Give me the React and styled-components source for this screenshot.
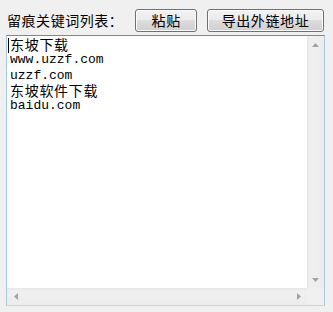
import React from "react";
import styled, { createGlobalStyle } from "styled-components";

const GlobalStyle = createGlobalStyle`
	html, body {
		margin: 0;
		padding: 0;
		background: #f0f0f0;
	}
	body {
		width: 333px;
		height: 312px;
		overflow: hidden;
		font-family: "Noto Sans CJK SC", "Liberation Sans", sans-serif;
		color: #000;
	}
`;

const Window = styled.div`
	display: flex;
	flex-direction: column;
	gap: 4px;
	padding: 9px 9px 0 6px;
`;

const Toolbar = styled.div`
	display: flex;
	align-items: center;
	height: 22px;
`;

const Label = styled.span`
	font-size: 14px;
	letter-spacing: 0.55px;
	line-height: 22px;
	padding-left: 1px;
	margin-right: 12px;
	white-space: nowrap;
`;

const Button = styled.button`
	box-sizing: border-box;
	width: ${(p) => p.$width}px;
	height: 23px;
	margin-right: ${(p) => p.$gap || 0}px;
	padding: 0;
	border: 1px solid #707070;
	border-radius: 3px;
	background: linear-gradient(#f2f2f2 0%, #ebebeb 50%, #dddddd 50%, #cfcfcf 100%);
	box-shadow: inset 0 0 0 1px #fbfbfb;
	font-family: "Noto Sans CJK SC", sans-serif;
	font-size: 14px;
	letter-spacing: 0.6px;
	line-height: 20px;
	color: #000;
`;

const TextBox = styled.div`
	box-sizing: border-box;
	width: 319px;
	height: 271px;
	border: 1px solid #a4c9e3;
	border-top-color: #5e8fc0;
	border-bottom-color: #b7d9ed;
	background: #fff;
	display: grid;
	grid-template-columns: 1fr 17px;
	grid-template-rows: 1fr 17px;
`;

const Edit = styled.div`
	padding: 1px 0 0 1px;
	min-width: 0;
`;

const Line = styled.div`
	height: 15.33px;
	line-height: 15.33px;
	white-space: nowrap;
	font-family: ${(p) =>
		p.$mono ? '"Liberation Mono", monospace' : '"Noto Sans CJK SC", sans-serif'};
	font-size: ${(p) => (p.$mono ? "13px" : "14px")};
	letter-spacing: ${(p) => (p.$mono ? "0" : "0.7px")};
	padding-left: 2px;
`;

const Caret = styled.span`
	display: inline-block;
	width: 1px;
	height: 15px;
	vertical-align: -3px;
	background: #000;
	margin-left: -2px;
	margin-right: 1px;
`;

const ScrollBar = styled.div`
	display: flex;
	flex-direction: ${(p) => (p.$horizontal ? "row" : "column")};
	justify-content: space-between;
	align-items: center;
	background: ${(p) =>
		p.$horizontal
			? "linear-gradient(#e6e6e6, #f0f0f0 3px, #ececec)"
			: "linear-gradient(90deg, #e6e6e6, #f0f0f0 3px, #ececec)"};
`;

const ArrowButton = styled.div`
	width: 17px;
	height: 17px;
	display: flex;
	align-items: center;
	justify-content: center;
`;

const Corner = styled.div`
	background: #f0f0f0;
`;

const Arrow = ({ dir }) => {
	const pts = {
		up: "0,4 7,4 3.5,0",
		down: "0,0 7,0 3.5,4",
		left: "4,0 4,7 0,3.5",
		right: "0,0 0,7 4,3.5",
	}[dir];
	const vertical = dir === "up" || dir === "down";
	return (
		<svg width={vertical ? 7 : 4} height={vertical ? 4 : 7} viewBox={vertical ? "0 0 7 4" : "0 0 4 7"}>
			<polygon points={pts} fill="#a2a2a2" />
		</svg>
	);
};

const lines = [
	{ text: "东坡下载" },
	{ text: "www.uzzf.com", mono: true },
	{ text: "uzzf.com", mono: true },
	{ text: "东坡软件下载" },
	{ text: "baidu.com", mono: true },
];

export default function App() {
	return (
		<>
			<GlobalStyle />
			<Window>
				<Toolbar>
					<Label>留痕关键词列表：</Label>
					<Button $width={62} $gap={10}>粘贴</Button>
					<Button $width={118}>导出外链地址</Button>
				</Toolbar>
				<TextBox>
					<Edit>
						{lines.map((l, i) => (
							<Line key={i} $mono={l.mono}>
								{i === 0 && <Caret />}
								{l.text}
							</Line>
						))}
					</Edit>
					<ScrollBar>
						<ArrowButton>
							<Arrow dir="up" />
						</ArrowButton>
						<ArrowButton>
							<Arrow dir="down" />
						</ArrowButton>
					</ScrollBar>
					<ScrollBar $horizontal>
						<ArrowButton>
							<Arrow dir="left" />
						</ArrowButton>
						<ArrowButton>
							<Arrow dir="right" />
						</ArrowButton>
					</ScrollBar>
					<Corner />
				</TextBox>
			</Window>
		</>
	);
}
